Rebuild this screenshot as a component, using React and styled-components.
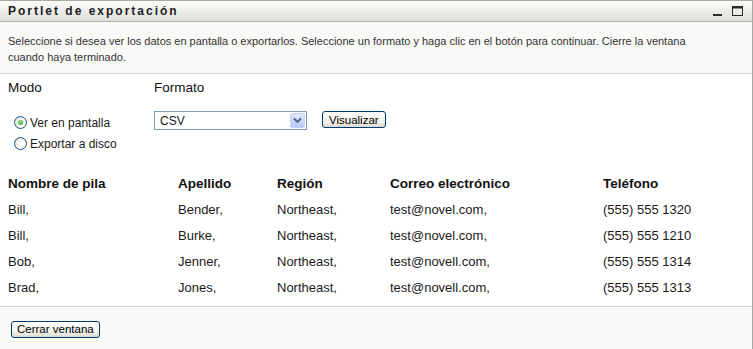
import React from 'react';
import styled, { createGlobalStyle } from 'styled-components';

// +++++++++ CSS +++++++++

const GlobalStyle = createGlobalStyle`
	html, body {
		margin: 0;
		padding: 0;
		background: #ffffff;
	}
	body {
		font-family: "Liberation Sans", Arial, sans-serif;
		color: #1a1a1a;
	}
`;

const Portlet = styled.div`
	width: 753px;
	height: 349px;
	box-sizing: border-box;
	border-top: 1px solid #a9a9a3;
	border-right: 1px solid #a9a9a3;
	display: flex;
	flex-direction: column;
	background: #ffffff;
`;

const TitleBar = styled.div`
	height: 20px;
	display: flex;
	align-items: center;
	justify-content: space-between;
	padding: 0 8px;
	background: linear-gradient(#fbfbfa, #dfdfdb);
	border-bottom: 1px solid #b3b3ad;
`;

const Title = styled.h1`
	margin: 0;
	font-family: "Liberation Sans", Arial, sans-serif;
	font-size: 12px;
	font-weight: bold;
	letter-spacing: 2px;
	color: #1d1d1d;
`;

const WindowIcons = styled.div`
	display: flex;
	align-items: center;
	gap: 8px;
`;

const Intro = styled.p`
	margin: 0;
	padding: 11px 40px 8px 8px;
	font-size: 11px;
	line-height: 16px;
	color: #333333;
	background: #f9f9f7;
	border-bottom: 1px solid #d2d2d0;
`;

const Body = styled.div`
	flex: 1;
	padding: 6px 0 0 8px;
	border-bottom: 1px solid #d8d8d6;
`;

const Options = styled.div`
	display: grid;
	grid-template-columns: 146px 1fr;
`;

const Label = styled.div`
	font-size: 13.5px;
	line-height: 16px;
	color: #111111;
`;

const RadioList = styled.div`
	margin-top: 16px;
	padding-left: 6px;
`;

const RadioRow = styled.label`
	display: flex;
	align-items: center;
	gap: 3px;
	height: 21px;
	font-size: 12px;
	color: #1a1a1a;
`;

const RadioDot = styled.span`
	width: 11px;
	height: 11px;
	border-radius: 50%;
	border: 1px solid #1c5180;
	background: radial-gradient(circle at 65% 65%, #ffffff 30%, #d8d8d0 100%);
	position: relative;

	&::after {
		content: '';
		display: ${p => (p.checked ? 'block' : 'none')};
		position: absolute;
		left: 3px;
		top: 3px;
		width: 5px;
		height: 5px;
		border-radius: 50%;
		background: radial-gradient(circle at 40% 40%, #8de58d, #21a121);
	}
`;

const FormatRow = styled.div`
	margin-top: 15px;
	display: flex;
	align-items: flex-start;
	gap: 15px;
`;

const Select = styled.div`
	width: 145px;
	height: 17px;
	border: 1px solid #7f9db9;
	display: flex;
	align-items: center;
	justify-content: space-between;
	font-size: 12px;
	padding: 0 1px 0 5px;
	box-sizing: content-box;
`;

const SelectArrow = styled.span`
	width: 15px;
	height: 15px;
	border-radius: 2px;
	background: linear-gradient(#dfe8fb, #b4c8f6);
	border: 1px solid #c3d3fd;
	box-sizing: border-box;
	display: flex;
	align-items: center;
	justify-content: center;
`;

const Button = styled.button`
	height: 17px;
	padding: 0 ${p => p.pad || 6}px;
	font-family: "Liberation Sans", Arial, sans-serif;
	font-size: 11.5px;
	line-height: 14px;
	color: #000000;
	border: 1px solid #003c74;
	border-radius: 3px;
	background: linear-gradient(#ffffff, #f0efe8 70%, #dcdad0);
`;

const Table = styled.div`
	margin-top: 16px;
	display: grid;
	grid-template-columns: 170px 99px 113px 213px 1fr;
	grid-auto-rows: 26px;
	align-items: center;
`;

const HeadCell = styled.div`
	font-size: 13.5px;
	font-weight: bold;
	color: #111111;
`;

const Cell = styled.div`
	font-size: 13px;
	color: #1a1a1a;
`;

const Footer = styled.div`
	height: 42px;
	background: #fafaf8;
	padding: 12px 0 0 11px;
	box-sizing: border-box;
`;

// +++++++++ DATA +++++++++

const columns = ['Nombre de pila', 'Apellido', 'Región', 'Correo electrónico', 'Teléfono'];

const rows = [
	['Bill,', 'Bender,', 'Northeast,', 'test@novel.com,', '(555) 555 1320'],
	['Bill,', 'Burke,', 'Northeast,', 'test@novel.com,', '(555) 555 1210'],
	['Bob,', 'Jenner,', 'Northeast,', 'test@novell.com,', '(555) 555 1314'],
	['Brad,', 'Jones,', 'Northeast,', 'test@novell.com,', '(555) 555 1313'],
];

// +++++++++ COMPONENT +++++++++

const App = () => (
	<>
		<GlobalStyle />
		<Portlet>
			<TitleBar>
				<Title>Portlet de exportación</Title>
				<WindowIcons>
					<svg width="12" height="12" viewBox="0 0 12 12">
						<rect x="1" y="9" width="9" height="2" fill="#2a2a2a" />
					</svg>
					<svg width="12" height="12" viewBox="0 0 12 12">
						<rect x="0.5" y="1.5" width="10" height="9" fill="none" stroke="#2a2a2a" />
						<rect x="0.5" y="1.5" width="10" height="2" fill="#2a2a2a" />
					</svg>
				</WindowIcons>
			</TitleBar>
			<Intro>
				Seleccione si desea ver los datos en pantalla o exportarlos. Seleccione un formato y haga clic en el botón para continuar. Cierre la ventana cuando haya terminado.
			</Intro>
			<Body>
				<Options>
					<div>
						<Label>Modo</Label>
						<RadioList>
							<RadioRow><RadioDot checked />Ver en pantalla</RadioRow>
							<RadioRow><RadioDot />Exportar a disco</RadioRow>
						</RadioList>
					</div>
					<div>
						<Label>Formato</Label>
						<FormatRow>
							<Select>
								CSV
								<SelectArrow>
									<svg width="9" height="7" viewBox="0 0 9 7">
										<path d="M1 1.5 L4.5 5 L8 1.5" fill="none" stroke="#4d6185" strokeWidth="1.8" />
									</svg>
								</SelectArrow>
							</Select>
							<Button>Visualizar</Button>
						</FormatRow>
					</div>
				</Options>
				<Table>
					{columns.map(c => <HeadCell key={c}>{c}</HeadCell>)}
					{rows.map((r, i) => r.map((v, j) => <Cell key={`${i}-${j}`}>{v}</Cell>))}
				</Table>
			</Body>
			<Footer>
				<Button pad={5}>Cerrar ventana</Button>
			</Footer>
		</Portlet>
	</>
);

export default App;
